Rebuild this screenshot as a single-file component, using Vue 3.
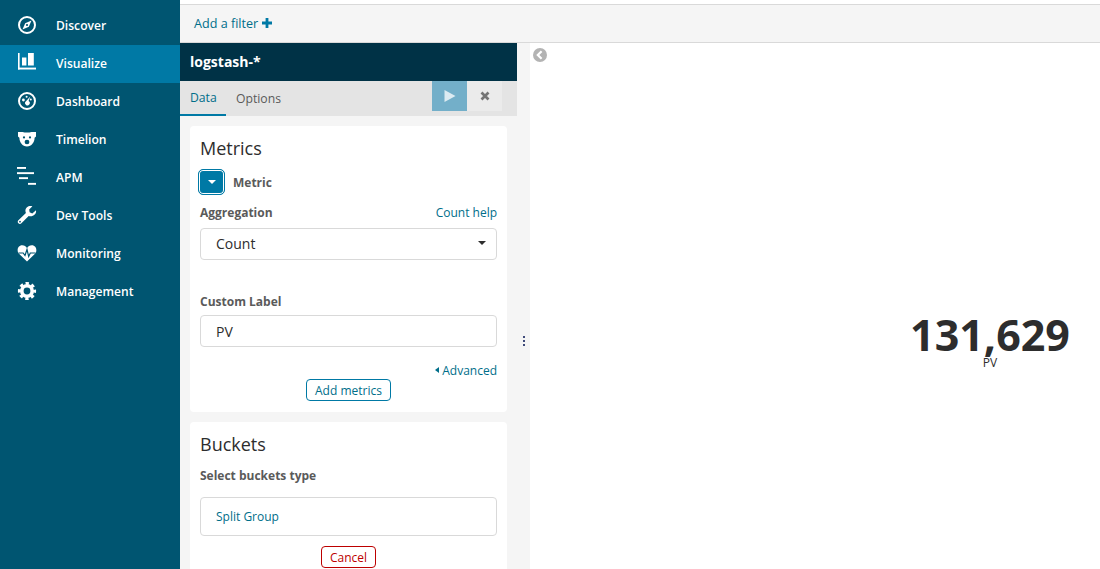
<script setup>
const navItems = [
  { label: 'Discover', icon: 'discover' },
  { label: 'Visualize', icon: 'visualize', active: true },
  { label: 'Dashboard', icon: 'dashboard' },
  { label: 'Timelion', icon: 'timelion' },
  { label: 'APM', icon: 'apm' },
  { label: 'Dev Tools', icon: 'tools' },
  { label: 'Monitoring', icon: 'monitoring' },
  { label: 'Management', icon: 'management' }
]
</script>

<template>
  <div class="app">
    <nav class="sidebar">
      <a v-for="item in navItems" :key="item.label" class="nav-item" :class="{ active: item.active }">
        <svg class="nav-icon" viewBox="0 0 20 20" width="20" height="20">
          <g v-if="item.icon === 'discover'">
            <circle cx="10" cy="10" r="8" fill="none" stroke="#fff" stroke-width="2" />
            <path d="M14.5 5.5 L11.8 11.8 L5.5 14.5 L8.2 8.2 Z" fill="#fff" />
            <circle cx="10" cy="10" r="1.1" fill="#005571" />
          </g>
          <g v-else-if="item.icon === 'visualize'" fill="#fff">
            <rect x="1" y="0" width="1.6" height="16.5" />
            <rect x="1" y="14.6" width="18" height="1.9" />
            <rect x="5" y="4.5" width="4.4" height="8" />
            <rect x="11" y="0" width="5.8" height="12.5" />
          </g>
          <g v-else-if="item.icon === 'dashboard'">
            <circle cx="10" cy="10" r="8" fill="none" stroke="#fff" stroke-width="2" />
            <circle cx="6.4" cy="9" r="1.4" fill="#fff" />
            <circle cx="9.6" cy="5.8" r="1" fill="#fff" />
            <circle cx="13.8" cy="8.6" r="1" fill="#fff" />
            <path d="M13.2 5.4 L11.6 10 A2.3 2.3 0 1 1 9 10.2 Z" fill="#fff" />
          </g>
          <g v-else-if="item.icon === 'timelion'">
            <path d="M1 3 H5.5 C8 3.8 12 3.8 14.5 3 H19 V7.5 L17.6 8.8 C17.6 13.5 14.5 17.5 10 17.5 C5.5 17.5 2.4 13.5 2.4 8.8 L1 7.5 Z" fill="#fff" />
            <circle cx="7" cy="8.4" r="1.1" fill="#005571" />
            <circle cx="13" cy="8.4" r="1.1" fill="#005571" />
            <ellipse cx="10" cy="13" rx="2.4" ry="2.2" fill="#005571" />
          </g>
          <g v-else-if="item.icon === 'apm'" fill="#fff">
            <rect x="0" y="0" width="9" height="1.9" />
            <rect x="0" y="5.2" width="17" height="1.9" />
            <rect x="2" y="10.2" width="9" height="1.9" />
            <rect x="11" y="15.9" width="8" height="1.9" />
          </g>
          <g v-else-if="item.icon === 'tools'">
            <path d="M19 5.2 L15.3 8.4 L12.6 7.3 L12.2 4.6 L15.4 1.3 C12.3 0.1 8.5 2 8.4 5.6 C8.4 6.6 8.6 7.4 8.9 8 L1.4 15.2 C0.4 16.3 0.7 17.6 1.4 18.3 C2.2 19 3.5 19.2 4.4 18.2 L11.7 10.9 C15.4 12.2 19.8 9.3 19 5.2 Z" fill="#fff" />
            <circle cx="3" cy="16.7" r="0.9" fill="#005571" />
          </g>
          <g v-else-if="item.icon === 'monitoring'">
            <path d="M10 18.5 L2 10.8 C-0.6 8 0.6 2.3 5.2 2.3 C7.4 2.3 9 3.6 10 5 C11 3.6 12.6 2.3 14.8 2.3 C19.4 2.3 20.6 8 18 10.8 Z" fill="#fff" />
            <path d="M1.5 10 H6.2 L8 12.5 L10 6.5 L11.7 13.5 L13.3 10 H18.5" fill="none" stroke="#005571" stroke-width="1.2" />
          </g>
          <g v-else-if="item.icon === 'management'">
            <circle cx="10" cy="10" r="5.2" fill="none" stroke="#fff" stroke-width="3.6" />
            <circle cx="10" cy="10" r="7.6" fill="none" stroke="#fff" stroke-width="3" stroke-dasharray="3.3 2.67" stroke-dashoffset="1.65" />
          </g>
        </svg>
        <span class="nav-label">{{ item.label }}</span>
      </a>
    </nav>

    <main class="main">
      <div class="filter-bar">
        <span class="add-filter">Add a filter</span>
        <svg class="plus" viewBox="0 0 10 10" width="10" height="10"><path d="M3.6 0 H6.4 V3.6 H10 V6.4 H6.4 V10 H3.6 V6.4 H0 V3.6 H3.6 Z" fill="#0079a5" /></svg>
      </div>

      <div class="workspace">
        <section class="editor">
          <header class="index-title">logstash-*</header>
          <div class="tabs">
            <span class="tab current">Data</span>
            <span class="tab">Options</span>
            <div class="tab-actions">
              <button class="run">
                <svg viewBox="0 0 12 12" width="12" height="12"><path d="M0.5 0 L11.5 6 L0.5 12 Z" fill="#fff" fill-opacity="0.75" /></svg>
              </button>
              <button class="discard">
                <svg viewBox="0 0 10 10" width="10" height="10"><path d="M1.5 1.5 L8.5 8.5 M8.5 1.5 L1.5 8.5" stroke="#757575" stroke-width="2.7" /></svg>
              </button>
            </div>
          </div>

          <div class="panels">
            <div class="card metrics">
              <h2>Metrics</h2>
              <div class="metric-row">
                <span class="toggle"><span class="caret white"></span></span>
                <strong>Metric</strong>
              </div>
              <div class="label-row">
                <strong>Aggregation</strong>
                <a>Count help</a>
              </div>
              <div class="field select"><span>Count</span><span class="caret dark"></span></div>
              <strong class="custom-label">Custom Label</strong>
              <div class="field label-input">PV</div>
              <div class="advanced"><span class="caret-left"></span>Advanced</div>
              <div class="btn-row"><span class="btn primary">Add metrics</span></div>
            </div>

            <div class="card buckets">
              <h2>Buckets</h2>
              <strong class="select-type">Select buckets type</strong>
              <div class="split">Split Group</div>
              <div class="btn-row"><span class="btn danger">Cancel</span></div>
            </div>
          </div>
        </section>

        <div class="resizer"><span></span><span></span><span></span></div>

        <section class="vis">
          <svg class="collapse" viewBox="0 0 14 14" width="14" height="14">
            <circle cx="7" cy="7" r="7" fill="#b3b3b3" />
            <path d="M8.6 3.2 L4.8 7 L8.6 10.8" fill="none" stroke="#fff" stroke-width="2.2" />
          </svg>
          <div class="metric-vis">
            <div class="metric-value">131,629</div>
            <div class="metric-title">PV</div>
          </div>
        </section>
      </div>
    </main>
  </div>
</template>

<style>
html, body { margin: 0; height: 100%; overflow: hidden; background: #fff; }
</style>

<style scoped>
.app {
  display: flex;
  width: 1100px;
  height: 569px;
  overflow: hidden;
  font-family: "Open Sans", sans-serif;
  font-size: 12px;
  color: #2d2d2d;
}
.sidebar {
  width: 180px;
  flex: none;
  padding-top: 7px;
  box-sizing: border-box;
  background: #005571;
}
.nav-item {
  display: flex;
  align-items: center;
  height: 38px;
  padding-left: 17px;
  color: #fff;
}
.nav-item.active { background: #0079a5; }
.nav-icon { flex: none; margin-top: -3px; }
.nav-label {
  margin-left: 19px;
  margin-top: -2px;
  font-size: 12.1px;
  font-weight: 600;
}
.main { flex: 1; min-width: 0; display: flex; flex-direction: column; }
.filter-bar {
  height: 39px;
  margin-top: 4px;
  flex: none;
  box-sizing: border-box;
  display: flex;
  align-items: center;
  gap: 4px;
  padding: 0 0 1px 14px;
  background: #f5f5f5;
  border-top: 1px solid #d9d9d9;
  border-bottom: 1px solid #d9d9d9;
  color: #006e8a;
  font-size: 12.6px;
}
.workspace { flex: 1; display: flex; min-height: 0; }
.editor { width: 337px; flex: none; display: flex; flex-direction: column; background: #f5f5f5; }
.index-title {
  height: 38px;
  flex: none;
  box-sizing: border-box;
  padding: 0 10px 2px;
  display: flex;
  align-items: center;
  background: #003246;
  color: #fff;
  font-size: 14px;
  font-weight: 700;
}
.tabs {
  height: 35px;
  flex: none;
  display: flex;
  background: #e4e4e4;
  font-size: 12.2px;
}
.tab {
  padding: 0 10px;
  display: flex;
  align-items: center;
  color: #5a5a5a;
  box-sizing: border-box;
  height: 35px;
  padding-bottom: 1px;
  margin-right: 0;
}
.tab.current { color: #006e8a; border-bottom: 2px solid #0079a5; padding-top: 1px; width: 46px; }
.tab-actions { margin-left: auto; display: flex; margin-right: 15px; height: 30px; }
.tab-actions button {
  border: 0;
  padding: 0;
  width: 35px;
  height: 30px;
  display: flex;
  align-items: center;
  justify-content: center;
}
.run { background: #73afc9; }
.discard { background: #ebebeb; }
.panels {
  flex: 1;
  min-height: 0;
  overflow: hidden;
  padding: 10px;
  display: flex;
  flex-direction: column;
  gap: 10px;
}
.card {
  background: #fff;
  border-radius: 4px;
  padding: 10px;
  flex: none;
}
.metrics { height: 286px; box-sizing: border-box; }
.buckets { height: 170px; box-sizing: border-box; }
h2 {
  margin: 0;
  font-size: 18px;
  font-weight: 400;
  line-height: 25px;
  color: #2d2d2d;
}
strong { font-size: 12px; font-weight: 700; color: #5a5a5a; }
.metric-row { display: flex; align-items: center; gap: 8px; margin-top: 8px; height: 26px; }
.toggle {
  width: 27px;
  height: 26px;
  box-sizing: border-box;
  margin-left: -2px;
  border: 1px solid #0079a5;
  border-radius: 5px;
  background: #0079a5;
  box-shadow: inset 0 0 0 1px #fff;
  display: flex;
  align-items: center;
  justify-content: center;
}
.caret { display: block; width: 0; height: 0; border-left: 4px solid transparent; border-right: 4px solid transparent; }
.caret.white { border-top: 4px solid #fff; }
.caret.dark { border-top: 4px solid #2d2d2d; margin-right: -5px; }
.label-row { display: flex; justify-content: space-between; align-items: center; margin-top: 8px; height: 18px; }
.label-row a { color: #006e8a; }
.field {
  box-sizing: border-box;
  height: 32px;
  margin-top: 7px;
  padding: 0 15px;
  display: flex;
  align-items: center;
  border: 1px solid #d9d9d9;
  border-radius: 4px;
  font-size: 14px;
  color: #2d2d2d;
}
.select { justify-content: space-between; padding-bottom: 2px; }
.custom-label { display: block; margin-top: 33px; line-height: 18px; }
.label-input { margin-top: 4px; }
.advanced {
  display: flex;
  justify-content: flex-end;
  align-items: center;
  margin-top: 14px;
  height: 18px;
  color: #006e8a;
}
.caret-left { width: 0; height: 0; border-top: 3.5px solid transparent; border-bottom: 3.5px solid transparent; border-right: 4px solid #006e8a; margin-right: 3px; }
.btn-row { display: flex; justify-content: center; }
.btn {
  box-sizing: border-box;
  height: 22px;
  padding: 0 8px;
  display: flex;
  align-items: center;
  border: 1px solid;
  border-radius: 4px;
  background: #fff;
  font-size: 12px;
}
.btn.primary { color: #006e8a; border-color: #0079a5; }
.btn.danger { color: #bd0000; border-color: #bd0000; }
.select-type { display: block; margin-top: 10px; line-height: 18px; }
.split {
  box-sizing: border-box;
  height: 39px;
  margin-top: 12px;
  padding: 0 15px;
  display: flex;
  align-items: center;
  border: 1px solid #d9d9d9;
  border-radius: 4px;
  color: #006e8a;
}
.buckets .btn-row { margin-top: 10px; }
.resizer {
  width: 13px;
  flex: none;
  background: #f5f5f5;
  display: flex;
  flex-direction: column;
  align-items: center;
  justify-content: center;
  gap: 2px;
  padding-top: 70px;
  box-sizing: border-box;
}
.resizer span { width: 2px; height: 2px; background: #3f4a7a; }
.vis { flex: none; width: 920px; position: relative; background: #fff; display: flex; align-items: center; justify-content: center; }
.collapse { position: absolute; left: 3px; top: 5px; }
.metric-vis { text-align: center; margin-top: 70px; }
.metric-value { font-size: 43px; font-weight: 700; line-height: 42px; color: #2d2d2d; }
.metric-title { font-size: 12px; line-height: 12px; margin-top: 1px; color: #2d2d2d; }
</style>
